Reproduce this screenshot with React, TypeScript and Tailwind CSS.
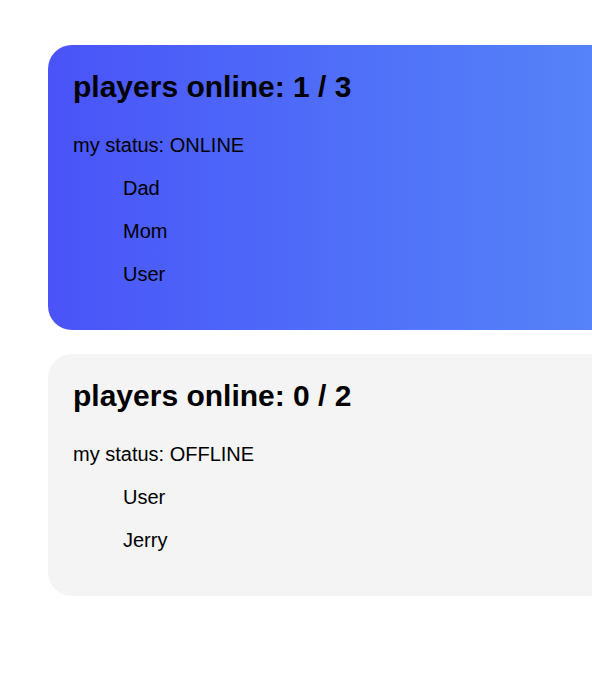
const groups = [
  {
    online: 1,
    total: 3,
    status: 'ONLINE',
    players: ['Dad', 'Mom', 'User'],
    active: true,
  },
  {
    online: 0,
    total: 2,
    status: 'OFFLINE',
    players: ['User', 'Jerry'],
    active: false,
  },
];

export default function App() {
  return (
    <div
      className="w-full min-h-[682px] overflow-hidden bg-white text-black"
      style={{ fontFamily: '"Liberation Sans", Arial, sans-serif' }}
    >
      <div className="pt-[45px] pl-12 flex flex-col gap-6">
        {groups.map((g, i) => (
          <div
            key={i}
            className={`w-[640px] shrink-0 rounded-[24px] pt-[25px] pb-[45px] pl-[25px] ${
              g.active ? 'bg-gradient-to-r from-[#4a53f8] to-[#588af8]' : 'bg-[#f4f4f4]'
            }`}
          >
            <h2 className="text-[30px] leading-[34px] font-bold">
              players online: {g.online} / {g.total}
            </h2>
            <p className="mt-[30px] text-[20px] leading-[22px]">my status: {g.status}</p>
            <ul className="mt-[21px] pl-[50px] flex flex-col gap-[21px]">
              {g.players.map((p) => (
                <li key={p} className="text-[20px] leading-[22px]">
                  {p}
                </li>
              ))}
            </ul>
          </div>
        ))}
      </div>
    </div>
  );
}
